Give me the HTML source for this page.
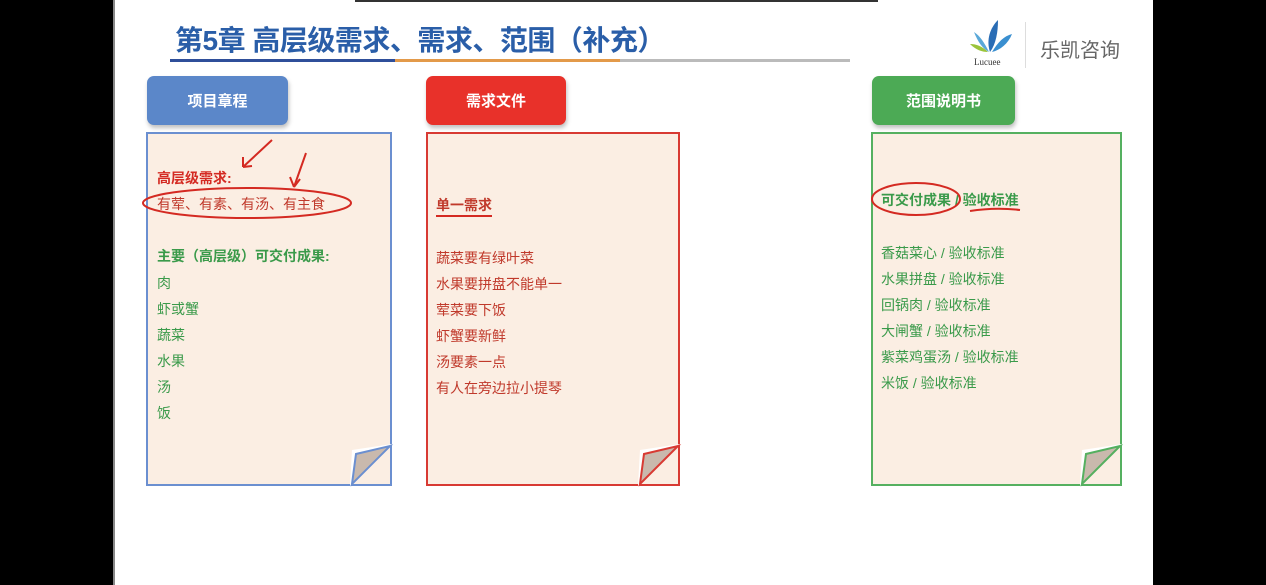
<!DOCTYPE html>
<html><head><meta charset="utf-8"><style>
*{margin:0;padding:0;box-sizing:border-box}
body{width:1266px;height:585px;background:#000;position:relative;overflow:hidden;font-family:"Liberation Sans","Noto Sans CJK SC",sans-serif}
.slide{position:absolute;left:113px;top:0;width:1040px;height:585px;background:#fff;border-left:2px solid #888}
.a{position:absolute;white-space:nowrap}
.btn{position:absolute;height:49px;border-radius:7px;color:#fff;font-weight:bold;font-size:15px;display:flex;align-items:center;justify-content:center;box-shadow:1px 3px 4px rgba(0,0,0,.25)}
.paper{position:absolute;top:132px;height:354px;background:#fbeee3;border:2px solid}
.t{position:absolute;font-size:14px;white-space:nowrap}
</style></head><body>
<div class="slide"></div>
<div class="a" style="left:355px;top:0;width:523px;height:2px;background:#333"></div>
<div class="a" style="left:175px;top:19px;font-size:28px;font-weight:bold;color:#2a5ea8;letter-spacing:-0.5px">第5章 高层级需求、需求、范围（补充）</div>
<div class="a" style="left:170px;top:59px;width:225px;height:3px;background:#2f4f9a"></div>
<div class="a" style="left:395px;top:59px;width:225px;height:3px;background:#e39a4a"></div>
<div class="a" style="left:620px;top:59px;width:230px;height:3px;background:#bbb"></div>
<svg class="a" style="left:968px;top:18px" width="52" height="50" viewBox="0 0 52 50">
<path d="M22 34 C18 22 22 10 30 2 C30 14 28 26 22 34Z" fill="#2a6db5"/>
<path d="M24 34 C30 24 36 18 44 16 C40 26 32 32 24 34Z" fill="#3a8fd0"/>
<path d="M20 34 C14 28 8 26 2 26 C8 32 14 34 20 34Z" fill="#9bc43a"/>
<path d="M21 34 C16 24 12 18 6 14 C10 24 14 30 21 34Z" fill="#5aa8d8"/>
<text x="6" y="47" font-size="9" fill="#333" font-family="Liberation Serif">Lucuee</text></svg>
<div class="a" style="left:1025px;top:22px;width:1px;height:46px;background:#ddd"></div>
<div class="a" style="left:1040px;top:34px;font-size:20px;color:#666">乐凯咨询</div>

<div class="btn" style="left:147px;top:76px;width:141px;background:#5b87c9">项目章程</div>
<div class="btn" style="left:426px;top:76px;width:140px;background:#e8312a">需求文件</div>
<div class="btn" style="left:872px;top:76px;width:143px;background:#4caa55">范围说明书</div>

<div class="paper" style="left:146px;width:246px;border-color:#6b8fd0"></div>
<div class="paper" style="left:426px;width:254px;border-color:#d83a33"></div>
<div class="paper" style="left:871px;width:251px;border-color:#55b060"></div>
<svg class="a" style="left:346px;top:440px" width="48" height="48"><path d="M46 4 L4 46 L6 10 Z" fill="#fff"/><path d="M44 6 L6 44 L10 14 Z" fill="#c9b9ad" stroke="#6b8fd0" stroke-width="2"/></svg>
<svg class="a" style="left:634px;top:440px" width="48" height="48"><path d="M46 4 L4 46 L6 10 Z" fill="#fff"/><path d="M44 6 L6 44 L10 14 Z" fill="#c9b9ad" stroke="#d83a33" stroke-width="2"/></svg>
<svg class="a" style="left:1076px;top:440px" width="48" height="48"><path d="M46 4 L4 46 L6 10 Z" fill="#fff"/><path d="M44 6 L6 44 L10 14 Z" fill="#c9b9ad" stroke="#55b060" stroke-width="2"/></svg>

<div class="t" style="left:157px;top:168px;color:#d42a22;font-weight:bold">高层级需求:</div>
<div class="t" style="left:157px;top:194px;color:#c0392b">有荤、有素、有汤、有主食</div>
<svg class="a" style="left:140px;top:135px" width="230" height="95" fill="none" stroke="#d42a22" stroke-width="2">
<ellipse cx="107" cy="68" rx="104" ry="15"/><path d="M132 5 L103 32 M103 32 L103 22 M103 32 L112 31"/><path d="M166 18 L154 52 M154 52 L150 42 M154 52 L160 44"/></svg>
<div class="t" style="left:157px;top:246px;color:#3a9a4a;font-weight:bold">主要（高层级）可交付成果:</div>
<div class="t" style="left:157px;top:270px;color:#3a9a4a;line-height:26px">肉<br>虾或蟹<br>蔬菜<br>水果<br>汤<br>饭</div>

<div class="t" style="left:436px;top:195px;color:#c0392b;font-weight:bold;border-bottom:2px solid #d42a22">单一需求</div>
<div class="t" style="left:436px;top:245px;color:#c0392b;line-height:26px">蔬菜要有绿叶菜<br>水果要拼盘不能单一<br>荤菜要下饭<br>虾蟹要新鲜<br>汤要素一点<br>有人在旁边拉小提琴</div>

<div class="t" style="left:881px;top:190px;color:#3a9a4a;font-weight:bold">可交付成果 / 验收标准</div>
<svg class="a" style="left:870px;top:180px" width="160" height="40" fill="none" stroke="#d42a22" stroke-width="2"><ellipse cx="46" cy="19" rx="44" ry="16"/><path d="M100 31 Q125 27 150 30"/></svg>
<div class="t" style="left:881px;top:240px;color:#3a9a4a;line-height:26px">香菇菜心 / 验收标准<br>水果拼盘 / 验收标准<br>回锅肉 / 验收标准<br>大闸蟹 / 验收标准<br>紫菜鸡蛋汤 / 验收标准<br>米饭 / 验收标准</div>
</body></html>
